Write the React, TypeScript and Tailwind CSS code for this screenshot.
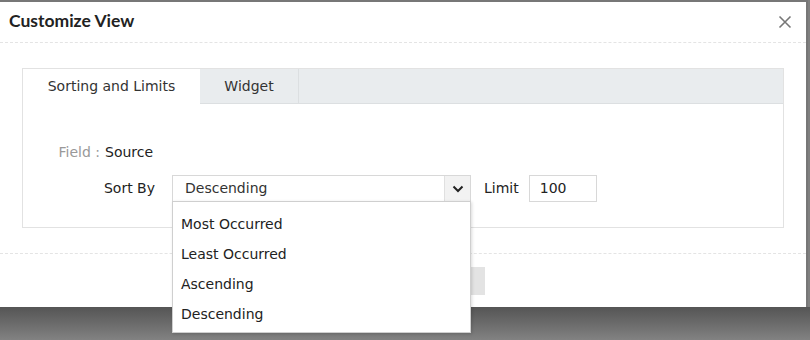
import React from "react";

const options = ["Most Occurred", "Least Occurred", "Ascending", "Descending"];

const App: React.FC = () => {
  return (
    <div
      className="relative w-[810px] h-[340px] overflow-hidden flex flex-col bg-[#808080] text-[#333]"
      style={{ fontFamily: '"DejaVu Sans", Verdana, sans-serif' }}
    >
      {/* Modal */}
      <div className="w-[808px] h-[307px] shrink-0 bg-white border-t-2 border-r-2 border-[#777] flex flex-col">
        {/* Header */}
        <div className="h-[41px] flex items-center justify-between pl-[9px] pr-[14px] border-b border-dashed border-[#e4e4e4]">
          <h1
            className="text-[17.5px] font-bold text-[#222] -mt-[1px]"
            style={{ fontFamily: "Lato, sans-serif" }}
          >
            Customize View
          </h1>
          <svg width="14" height="14" viewBox="0 0 14 14" className="text-[#777]">
            <path d="M1.5 1.5L12.5 12.5M12.5 1.5L1.5 12.5" stroke="currentColor" strokeWidth="1.6" />
          </svg>
        </div>

        {/* Body */}
        <div className="px-[22px] pt-[25px] pb-[25px]">
          <div className="w-[762px] h-[160px] border border-[#e2e2e2]">
            {/* Tabs */}
            <div className="flex h-[35px] bg-[#e9ecee] border-b border-[#dcdfe1]">
              <div className="w-[177px] h-[35px] bg-white flex items-center justify-center text-[14px]">
                Sorting and Limits
              </div>
              <div className="w-[99px] flex items-center justify-center text-[14px] border-r border-[#dcdfe1]">
                Widget
              </div>
            </div>

            {/* Form */}
            <div className="pt-[39px] text-[14px]">
              <div className="flex items-center h-[18px]">
                <span className="w-[77px] text-right text-[#999]">Field :</span>
                <span className="ml-[5px] text-[#222]">Source</span>
              </div>
              <div className="flex items-center mt-[14px] h-[27px]">
                <span className="w-[132px] text-right text-[#222]">Sort By</span>
                <div className="ml-[17px] w-[299px] h-[27px] border border-[#d8d8d8] flex items-center">
                  <span className="flex-1 pl-[12px] text-[#333]">Descending</span>
                  <div className="w-[26px] h-full bg-[#f2f2f2] border-l border-[#e0e0e0] flex items-center justify-center">
                    <svg width="12" height="8" viewBox="0 0 12 8">
                      <path d="M1.5 1.5L6 6L10.5 1.5" fill="none" stroke="#222" strokeWidth="2" />
                    </svg>
                  </div>
                </div>
                <span className="ml-[13px] text-[#222]">Limit</span>
                <div className="ml-[10px] w-[68px] h-[27px] border border-[#d8d8d8] flex items-center pl-[10px] text-[#222]">
                  100
                </div>
              </div>
            </div>
          </div>
        </div>

        {/* Footer */}
        <div className="flex-1 border-t border-dashed border-[#e4e4e4] pt-[13px] pl-[470px]">
          <div className="w-[15px] h-[28px] bg-[#e3e3e3]" />
        </div>
      </div>

      {/* Backdrop below modal */}
      <div className="flex-1 bg-gradient-to-b from-[#555] to-[#828282]" />

      {/* Dropdown menu */}
      <div className="absolute left-[172px] top-[201px] w-[299px] h-[132px] bg-white border border-[#cfcfcf] shadow-[1px_1px_3px_rgba(0,0,0,0.15)] pt-[7px] text-[14px] text-[#222]">
        {options.map((o) => (
          <div key={o} className="h-[30px] flex items-center pl-[8px]">
            {o}
          </div>
        ))}
      </div>
    </div>
  );
};

export default App;
